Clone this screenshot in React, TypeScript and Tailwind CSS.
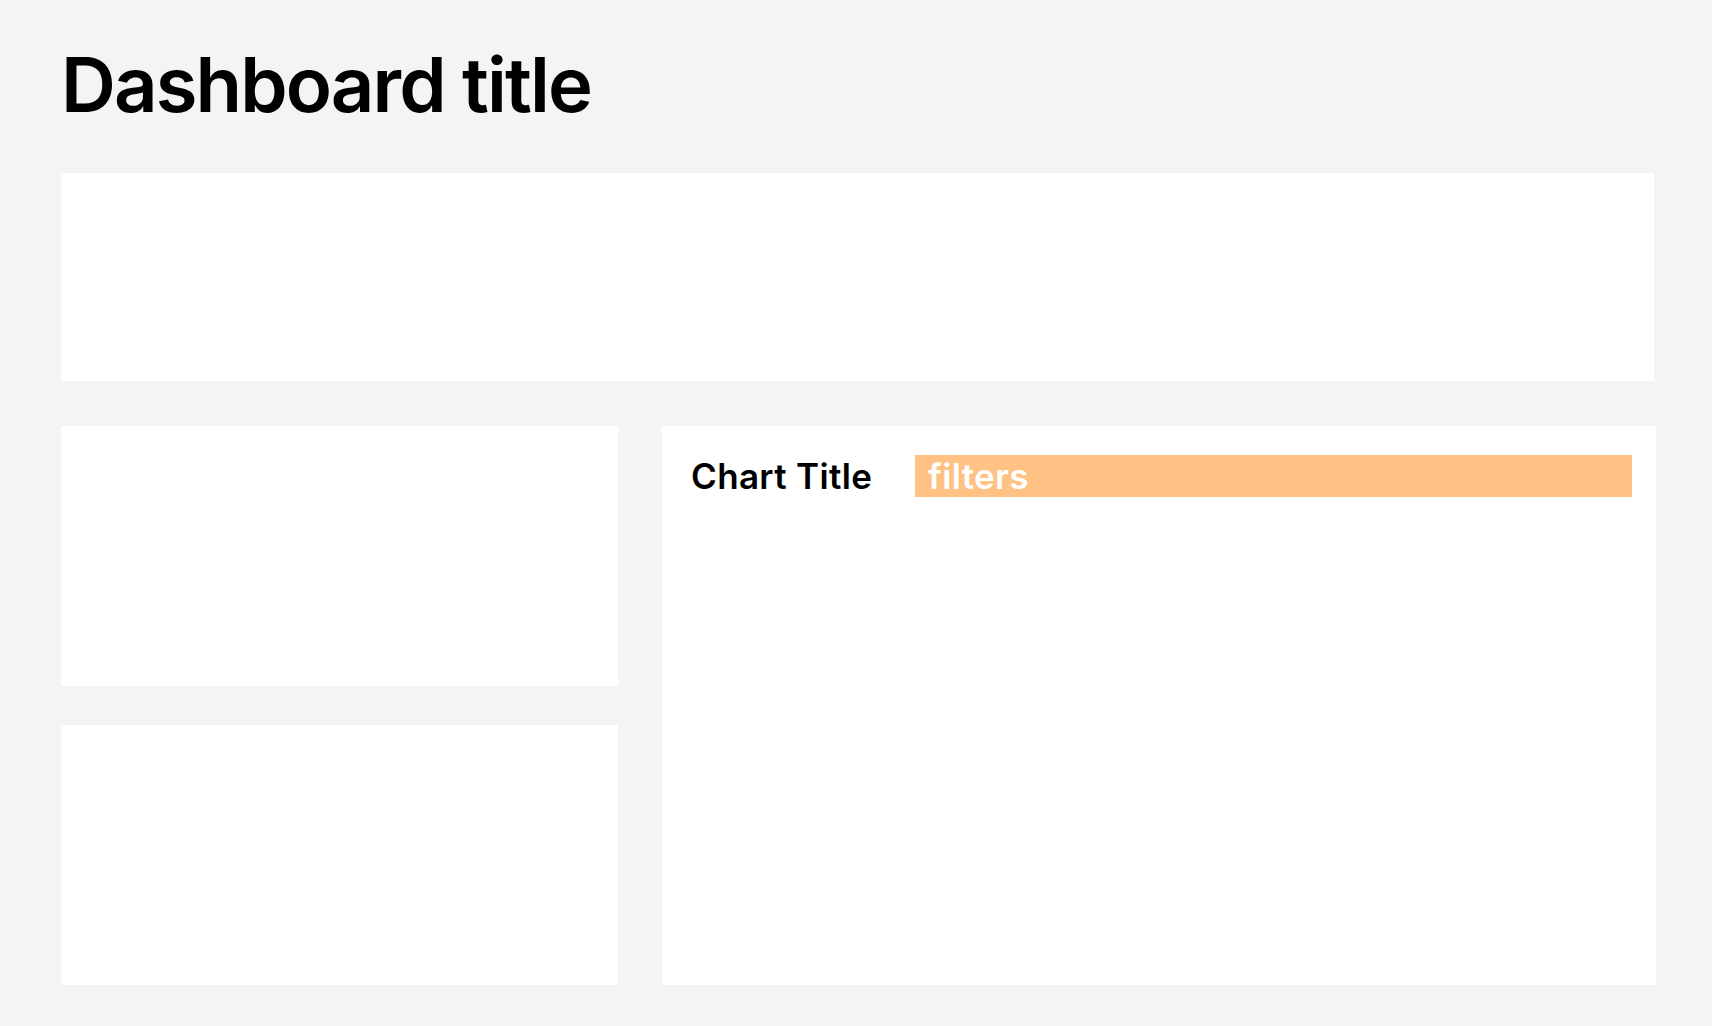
export default function App() {
  return (
    <div
      className="min-h-screen w-full bg-[#f5f3f4] pl-[61px] pr-[56px] pt-[46px] pb-[41px]"
      style={{ fontFamily: "Inter, 'Noto Sans', sans-serif" }}
    >
      {/* Page heading */}
      <h1 className="text-[76px] font-semibold leading-none tracking-[-0.025em] text-black">
        Dashboard title
      </h1>

      {/* Summary strip */}
      <div className="mt-[51px] h-[208px] w-[1593px] bg-white" />

      {/* Lower grid */}
      <div className="mt-[45px] grid grid-cols-[557px_994px] gap-x-[44px]">
        <div className="flex flex-col gap-[39px]">
          <div className="h-[260px] bg-white" />
          <div className="h-[260px] bg-white" />
        </div>

        <div className="h-[559px] bg-white pl-[29px] pr-[24px] pt-[29px]">
          <div className="flex items-center">
            <h2 className="w-[224px] shrink-0 text-[35px] font-semibold leading-none tracking-[0.01em] text-black">
              Chart Title
            </h2>
            <div className="flex h-[42px] flex-1 items-center bg-[#ffc184] pl-[13px]">
              <span className="text-[35px] font-semibold leading-none tracking-[0.01em] text-white">
                filters
              </span>
            </div>
          </div>
        </div>
      </div>
    </div>
  );
}
